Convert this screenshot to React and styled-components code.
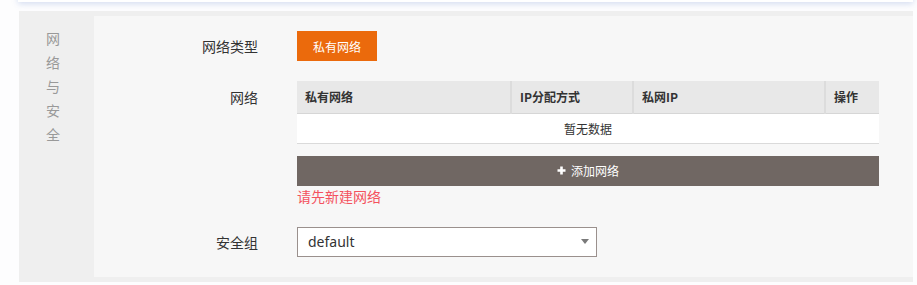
import styled, { createGlobalStyle } from "styled-components";

const GlobalStyle = createGlobalStyle`
  body {
    margin: 0;
    background: #fdfdfe;
    font-family: "Noto Sans CJK SC", "Noto Sans", sans-serif;
  }
`;

const Page = styled.div`
  width: 917px;
  height: 285px;
  overflow: hidden;
`;

const TopCard = styled.div`
  height: 40px;
  margin: -38px 4px 9px 18px;
  background: #fff;
  box-shadow: 0 2px 6px rgba(110, 140, 210, 0.28);
`;

const Section = styled.div`
  display: flex;
  margin-left: 19px;
  width: 894px;
  padding: 5px 0;
  background: #efefef;
`;

const SideTitle = styled.div`
  width: 75px;
  flex-shrink: 0;
  padding-top: 10px;
  display: flex;
  flex-direction: column;
  align-items: center;
  padding-right: 7px;
  box-sizing: border-box;

  & > span {
    font-size: 14px;
    line-height: 24px;
    color: #999;
  }
`;

const Panel = styled.div`
  flex: 1;
  background: #f7f7f7;
  padding: 15px 0 20px;
  display: flex;
  flex-direction: column;
`;

const Row = styled.div`
  display: grid;
  grid-template-columns: 164px 582px;
  column-gap: 39px;
  margin-top: ${(p) => p.gap || 0}px;
`;

const Label = styled.div`
  text-align: right;
  font-size: 14px;
  color: #333;
  line-height: ${(p) => p.lh || 30}px;
`;

const TypeButton = styled.button`
  width: 80px;
  height: 30px;
  border: none;
  background: #eb6a0c;
  color: #fff;
  font-family: inherit;
  font-size: 12px;
  padding: 0;
`;

const Table = styled.table`
  width: 582px;
  border-collapse: collapse;
  font-size: 12px;
  color: #333;
`;

const Th = styled.th`
  width: ${(p) => p.w}px;
  height: 32px;
  padding: 0 0 0 8px;
  text-align: left;
  font-weight: bold;
  background: #e8e8e8;
  border-bottom: 1px solid #d6d6d6;
  border-right: ${(p) => (p.last ? "none" : "2px solid #dcdcdc")};
  box-sizing: border-box;
`;

const Td = styled.td`
  height: 29px;
  padding: 0;
  line-height: 29px;
  text-align: center;
  background: #fff;
  border-bottom: 1px solid #dadada;
`;

const AddButton = styled.button`
  margin-top: 12px;
  width: 582px;
  height: 30px;
  border: none;
  background: #706763;
  color: #fff;
  font-family: inherit;
  font-size: 12px;
  display: flex;
  align-items: center;
  justify-content: center;
  gap: 5px;
  padding: 0;
`;

const ErrorText = styled.div`
  font-size: 14px;
  line-height: 20px;
  color: #f4525e;
`;

const Select = styled.div`
  width: 300px;
  height: 30px;
  box-sizing: border-box;
  border: 1px solid #9a908d;
  background: #fff;
  display: flex;
  align-items: center;
  justify-content: space-between;
  padding: 0 7px 0 10px;
  font-family: "Noto Sans", sans-serif;
  font-size: 14px;
  color: #333;
`;

const Caret = styled.span`
  width: 0;
  height: 0;
  border-left: 4px solid transparent;
  border-right: 4px solid transparent;
  border-top: 5px solid #7a7a7a;
`;

const PlusIcon = () => (
  <svg width="9" height="9" viewBox="0 0 9 9">
    <path d="M4.5 0.5v8M0.5 4.5h8" stroke="#fff" strokeWidth="2.6" />
  </svg>
);

export default function App() {
  return (
    <Page>
      <GlobalStyle />
      <TopCard />
      <Section>
        <SideTitle>
          {"网络与安全".split("").map((c) => (
            <span key={c}>{c}</span>
          ))}
        </SideTitle>
        <Panel>
          <Row>
            <Label>网络类型</Label>
            <div>
              <TypeButton>私有网络</TypeButton>
            </div>
          </Row>
          <Row gap={20}>
            <Label lh={32}>网络</Label>
            <div>
              <Table>
                <thead>
                  <tr>
                    <Th w={214}>私有网络</Th>
                    <Th w={122}>IP分配方式</Th>
                    <Th w={192}>私网IP</Th>
                    <Th w={54} last>
                      操作
                    </Th>
                  </tr>
                </thead>
                <tbody>
                  <tr>
                    <Td colSpan={4}>暂无数据</Td>
                  </tr>
                </tbody>
              </Table>
              <AddButton>
                <PlusIcon />
                添加网络
              </AddButton>
              <ErrorText>请先新建网络</ErrorText>
            </div>
          </Row>
          <Row gap={21}>
            <Label>安全组</Label>
            <div>
              <Select>
                default
                <Caret />
              </Select>
            </div>
          </Row>
        </Panel>
      </Section>
    </Page>
  );
}
